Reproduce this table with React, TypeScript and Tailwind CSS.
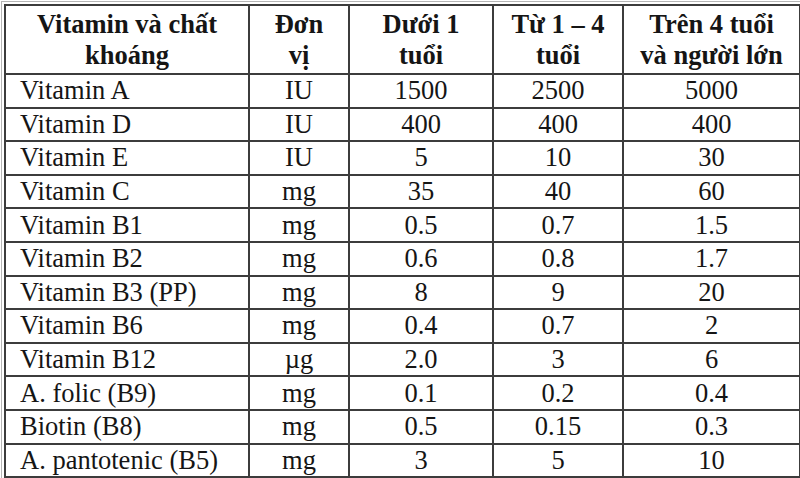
const rows: [string, string, string, string, string][] = [
  ['Vitamin A', 'IU', '1500', '2500', '5000'],
  ['Vitamin D', 'IU', '400', '400', '400'],
  ['Vitamin E', 'IU', '5', '10', '30'],
  ['Vitamin C', 'mg', '35', '40', '60'],
  ['Vitamin B1', 'mg', '0.5', '0.7', '1.5'],
  ['Vitamin B2', 'mg', '0.6', '0.8', '1.7'],
  ['Vitamin B3 (PP)', 'mg', '8', '9', '20'],
  ['Vitamin B6', 'mg', '0.4', '0.7', '2'],
  ['Vitamin B12', 'µg', '2.0', '3', '6'],
  ['A. folic (B9)', 'mg', '0.1', '0.2', '0.4'],
  ['Biotin (B8)', 'mg', '0.5', '0.15', '0.3'],
  ['A. pantotenic (B5)', 'mg', '3', '5', '10'],
];

export default function App() {
  return (
    <div className="w-[800px] h-[478px] bg-white overflow-hidden pl-[1px] pt-[1px] font-serif text-[#151515]">
      {/* faint crop edge */}
      <div className="border-l border-t border-[#b5b5b5] pl-[2px] pt-[2px]">
        <table className="table-fixed border-collapse w-[795px] text-[26.5px] leading-[31px] [font-family:Liberation_Serif,serif]">
          <colgroup>
            <col className="w-[244px]" />
            <col className="w-[100px]" />
            <col className="w-[144px]" />
            <col className="w-[130px]" />
            <col className="w-[177px]" />
          </colgroup>
          <thead>
            <tr className="h-[69px] text-center">
              <th className="border-2 border-[#3c3c3c] px-1 font-bold">
                Vitamin và chất
                <br />
                khoáng
              </th>
              <th className="border-2 border-[#3c3c3c] px-0 font-bold">
                Đơn
                <br />
                vị
              </th>
              <th className="border-2 border-[#3c3c3c] px-0 font-bold">
                Dưới 1
                <br />
                tuổi
              </th>
              <th className="border-2 border-[#3c3c3c] px-0 font-bold">
                Từ 1 – 4
                <br />
                tuổi
              </th>
              <th className="border-2 border-[#3c3c3c] px-0 font-bold whitespace-nowrap">
                Trên 4 tuổi
                <br />
                và người lớn
              </th>
            </tr>
          </thead>
          <tbody>
            {rows.map((r) => (
              <tr key={r[0]} className="h-[33.6px]">
                <td className="border-2 border-[#3c3c3c] pl-[14px] pr-1 whitespace-nowrap">{r[0]}</td>
                <td className="border-2 border-[#3c3c3c] text-center">{r[1]}</td>
                <td className="border-2 border-[#3c3c3c] text-center">{r[2]}</td>
                <td className="border-2 border-[#3c3c3c] text-center">{r[3]}</td>
                <td className="border-2 border-[#3c3c3c] text-center">{r[4]}</td>
              </tr>
            ))}
          </tbody>
        </table>
      </div>
    </div>
  );
}
